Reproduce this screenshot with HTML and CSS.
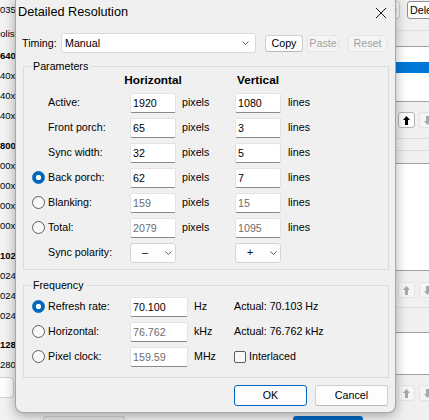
FILE: index.html
```html
<!DOCTYPE html>
<html>
<head>
<meta charset="utf-8">
<title>Detailed Resolution</title>
<link rel="stylesheet" href="styles.css">
</head>
<body>
<div class="desktop">
  <div class="app-left">
    <div class="ln ch">1035</div>
    <div class="ln cut g4">Polish</div>
    <div class="ln hd g2">640</div>
    <div class="ln ch">640x</div>
    <div class="ln ch">640x</div>
    <div class="ln ch">640x</div>
    <div class="ln hd g10">800</div>
    <div class="ln ch">800x</div>
    <div class="ln ch">800x</div>
    <div class="ln ch">800x</div>
    <div class="ln ch">800x</div>
    <div class="ln hd g10">102</div>
    <div class="ln ch">1024</div>
    <div class="ln ch">1024</div>
    <div class="ln ch">1024</div>
    <div class="ln hd g9">128</div>
    <div class="ln ch">1280</div>
    <div class="lbtn"></div>
    <div class="lbottom"><span class="lb1"></span><span class="lb2"></span></div>
  </div>

  <div class="app-right">
    <div class="rtool"><span class="rbtn first">Save</span><span class="rbtn">Delete</span></div>
    <div class="rhead"></div>
    <div class="rlist rl1"><div class="rsel"></div></div>
    <div class="rarr line">
      <span class="abtn"><svg width="7" height="9" viewBox="0 0 7 9"><path d="M3.5 0 L7 4 L5 4 L5 9 L2 9 L2 4 L0 4 Z" fill="#000"/></svg></span>
      <span class="abtn dis"><svg width="7" height="9" viewBox="0 0 7 9"><path d="M3.5 9 L7 5 L5 5 L5 0 L2 0 L2 5 L0 5 Z" fill="#a8a8a8"/></svg></span>
    </div>
    <div class="rband line"></div>
    <div class="rband"></div>
    <div class="rlist rl2"></div>
    <div class="rarr line r2">
      <span class="abtn dis"><svg width="7" height="9" viewBox="0 0 7 9"><path d="M3.5 0 L7 4 L5 4 L5 9 L2 9 L2 4 L0 4 Z" fill="#a8a8a8"/></svg></span>
      <span class="abtn dis"><svg width="7" height="9" viewBox="0 0 7 9"><path d="M3.5 9 L7 5 L5 5 L5 0 L2 0 L2 5 L0 5 Z" fill="#a8a8a8"/></svg></span>
    </div>
    <div class="rband3"></div>
    <div class="rlist rl3"></div>
    <div class="rarr">
      <span class="abtn dis"><svg width="7" height="9" viewBox="0 0 7 9"><path d="M3.5 0 L7 4 L5 4 L5 9 L2 9 L2 4 L0 4 Z" fill="#a8a8a8"/></svg></span>
      <span class="abtn dis"><svg width="7" height="9" viewBox="0 0 7 9"><path d="M3.5 9 L7 5 L5 5 L5 0 L2 0 L2 5 L0 5 Z" fill="#a8a8a8"/></svg></span>
    </div>
  </div>

  <div class="dialog">
    <div class="titlebar">
      <span class="title">Detailed Resolution</span>
      <svg class="close" width="10" height="10" viewBox="0 0 10 10"><path d="M0 0 L10 10 M10 0 L0 10" stroke="#1a1a1a" stroke-width="1"/></svg>
    </div>

    <div class="trow">
      <span class="tlabel">Timing:</span>
      <div class="combo"><span>Manual</span><svg class="chev" width="7" height="4" viewBox="0 0 7 4"><path d="M0.5 0.5 L3.5 3.5 L6.5 0.5" fill="none" stroke="#606060" stroke-width="1"/></svg></div>
      <button class="btn b-copy">Copy</button>
      <button class="btn dis b-paste">Paste</button>
      <button class="btn dis b-reset">Reset</button>
    </div>

    <div class="group params">
      <div class="gtitle">Parameters</div>
      <div class="pgrid">
        <div></div><div class="hdr">Horizontal</div><div></div><div class="hdr">Vertical</div><div></div>

        <div class="lab">Active:</div>
        <div class="edit">1920</div><div class="unit">pixels</div>
        <div class="edit">1080</div><div class="unit2">lines</div>

        <div class="lab">Front porch:</div>
        <div class="edit">65</div><div class="unit">pixels</div>
        <div class="edit">3</div><div class="unit2">lines</div>

        <div class="lab">Sync width:</div>
        <div class="edit">32</div><div class="unit">pixels</div>
        <div class="edit">5</div><div class="unit2">lines</div>

        <div class="lab rad"><span class="radio on"></span>Back porch:</div>
        <div class="edit">62</div><div class="unit">pixels</div>
        <div class="edit">7</div><div class="unit2">lines</div>

        <div class="lab rad"><span class="radio"></span>Blanking:</div>
        <div class="edit dis">159</div><div class="unit">pixels</div>
        <div class="edit dis">15</div><div class="unit2">lines</div>

        <div class="lab rad"><span class="radio"></span>Total:</div>
        <div class="edit dis">2079</div><div class="unit">pixels</div>
        <div class="edit dis">1095</div><div class="unit2">lines</div>

        <div class="lab">Sync polarity:</div>
        <div class="pol"><span class="pv">–</span><svg class="pchev" width="7" height="4" viewBox="0 0 7 4"><path d="M0.5 0.5 L3.5 3.5 L6.5 0.5" fill="none" stroke="#606060" stroke-width="1"/></svg></div>
        <div></div>
        <div class="pol"><span class="pv">+</span><svg class="pchev" width="7" height="4" viewBox="0 0 7 4"><path d="M0.5 0.5 L3.5 3.5 L6.5 0.5" fill="none" stroke="#606060" stroke-width="1"/></svg></div>
        <div></div>
      </div>
    </div>

    <div class="group freq">
      <div class="gtitle">Frequency</div>
      <div class="fgrid">
        <div class="lab rad"><span class="radio on"></span>Refresh rate:</div>
        <div class="edit">70.100</div><div class="unit">Hz</div>
        <div class="actual">Actual: 70.103 Hz</div>

        <div class="lab rad"><span class="radio"></span>Horizontal:</div>
        <div class="edit dis">76.762</div><div class="unit">kHz</div>
        <div class="actual">Actual: 76.762 kHz</div>

        <div class="lab rad"><span class="radio"></span>Pixel clock:</div>
        <div class="edit dis">159.59</div><div class="unit">MHz</div>
        <div class="flab"><span class="check"></span>Interlaced</div>
      </div>
    </div>

    <div class="actions">
      <button class="act def">OK</button>
      <button class="act">Cancel</button>
    </div>
  </div>
</div>
</body>
</html>
```

FILE: styles.css
```css
* { box-sizing: border-box; margin: 0; padding: 0; }
html, body { width: 429px; height: 420px; overflow: hidden; }
body {
  background: #f0f0f0;
  font-family: "Liberation Sans", Arial, sans-serif;
  font-size: 10.7px;
  color: #000;
  line-height: 1.2;
}
.desktop { position: relative; display: flex; width: 429px; height: 420px; }

/* ---------- background application window ---------- */
.app-left {
  flex: 1;
  display: flex;
  flex-direction: column;
  overflow: hidden;
  font-size: 9.5px;
  background: #f2f2f2;
}
.ln { height: 20px; line-height: 20px; white-space: nowrap; }
.ln.hd { font-weight: bold; }
.ln.ch { text-indent: -5.3px; }
.ln.cut { text-indent: -6px; }
.g2 { margin-top: 2px; }
.g4 { margin-top: 4px; }
.g9 { margin-top: 9px; }
.g10 { margin-top: 10px; }
.lbtn {
  margin-top: 2px;
  margin-left: -46px;
  width: 60px;
  height: 21px;
  flex: none;
  background: #fdfdfd;
  border: 1px solid #d0d0d0;
  border-radius: 4px;
}
.lbottom { margin-top: auto; height: 4px; display: flex; }
.lb1 { margin-left: 43px; width: 82px; background: #e9e9e9; border: 1px solid #d0d0d0; border-bottom: none; border-radius: 3px 3px 0 0; }
.lb2 { margin-left: 168px; width: 70px; background: #0067c0; border-radius: 3px 3px 0 0; }

.app-right {
  width: 40px;
  flex: none;
  display: flex;
  flex-direction: column;
  overflow: hidden;
  background: #f0f0f0;
}
.rtool { height: 31px; flex: none; border-bottom: 1px solid #dedede; display: flex; gap: 7px; padding-top: 1px; }
.rbtn {
  flex: none;
  height: 18px;
  line-height: 16px;
  padding: 0 2px;
  white-space: nowrap;
  background: #fdfdfd;
  border: 1px solid #8f8f8f;
  border-radius: 3px;
}
.rbtn.first { width: 41px; margin-left: -30px; border-color: #d0d0d0; color: #9a9a9a; overflow: hidden; text-align: right; }
.rhead { height: 15px; flex: none; }
.rlist { flex: none; background: #fff; border-top: 1px solid #a0a0a0; border-bottom: 1px solid #a0a0a0; }
.rl1 { height: 56px; }
.rl2 { height: 108px; }
.rl3 { height: 43px; }
.rsel { margin-top: 15px; height: 11px; background: #0078d7; }
.rarr { height: 37px; flex: none; display: flex; align-items: flex-start; gap: 4px; padding: 10px 0 0 9px; }
.rarr.r2 { padding-top: 11px; }
.line { border-bottom: 1px solid #dcdcdc; }
.rband { height: 12px; flex: none; }
.rband3 { height: 24px; flex: none; }
.abtn {
  flex: none;
  width: 17px;
  height: 16px;
  display: flex;
  align-items: center;
  justify-content: center;
  background: #fdfdfd;
  border: 1px solid #b4b4b4;
  border-radius: 3px;
}
.abtn.dis { background: #f5f5f5; border-color: #e3e3e3; }

/* ---------- dialog ---------- */
.dialog {
  position: absolute;
  left: 15px;
  top: -6px;
  width: 381px;
  height: 419px;
  background: #f0f0f0;
  border: 1px solid rgba(0, 0, 0, 0.3);
  border-radius: 8px;
  box-shadow: 0 3px 12px rgba(0, 0, 0, 0.32);
  display: flex;
  flex-direction: column;
}
.titlebar { flex: none; height: 36px; display: flex; align-items: center; padding-left: 2px; }
.title { font-size: 12.7px; }
.close { margin-left: auto; margin-right: 9px; }

.trow { display: flex; align-items: center; height: 20px; margin-top: 2px; padding-left: 6px; }
.tlabel { width: 39px; flex: none; }
.combo {
  width: 195px;
  height: 20px;
  flex: none;
  display: flex;
  align-items: center;
  justify-content: space-between;
  padding: 0 6px 0 3px;
  background: #fff;
  border: 1px solid #d9d9d9;
  border-radius: 3px;
}
.btn {
  font: inherit;
  height: 17px;
  flex: none;
  display: flex;
  align-items: center;
  justify-content: center;
  background: #fdfdfd;
  color: #000;
  border: 1px solid #d0d0d0;
  border-bottom-color: #b8b8b8;
  border-radius: 3px;
}
.btn.dis { background: #f5f5f5; border-color: #e5e5e5; color: #a0a0a0; }
.b-copy { width: 38px; margin-left: 9px; }
.b-paste { width: 32px; margin-left: 4px; }
.b-reset { width: 39px; margin-left: 9px; }

.group { margin: 0 6px 0 7px; border: 1px solid #dcdcdc; }
.params { margin-top: 13px; padding-bottom: 4px; }
.freq { margin-top: 15px; padding-bottom: 8px; }
.gtitle {
  margin: -7px 0 0 7px;
  padding: 0 2px;
  width: max-content;
  height: 13px;
  line-height: 13px;
  background: #f0f0f0;
}
.pgrid {
  display: grid;
  grid-template-columns: 106px 46px 59px 46px 1fr;
  grid-template-rows: 19px repeat(7, 25px);
  align-items: center;
  margin-top: -2px;
}
.fgrid {
  display: grid;
  grid-template-columns: 106px 58px 46px 1fr;
  grid-template-rows: repeat(3, 25px);
  align-items: center;
  margin-top: 2px;
}
.hdr { display: flex; justify-content: center; white-space: nowrap; font-weight: bold; font-size: 11.8px; }
.lab { padding-left: 24px; white-space: nowrap; }
.lab.rad { padding-left: 8px; display: flex; align-items: center; gap: 3px; }
.unit { padding-left: 6px; }
.unit2 { padding-left: 7px; }
.edit {
  height: 20px;
  line-height: 18px;
  padding-left: 2px;
  background: #fff;
  border: 1px solid #e3e3e3;
  border-bottom-color: #8a8a8a;
  border-radius: 2px;
}
.edit.dis { color: #6d6d6d; }
.radio {
  flex: none;
  width: 13px;
  height: 13px;
  border-radius: 50%;
  border: 1px solid #5c5c5c;
  background: #f9f9f9;
}
.radio.on {
  border-color: #0067c0;
  background: radial-gradient(circle, #fff 0 2.4px, #0067c0 3px);
}
.pol {
  width: 46px;
  height: 20px;
  display: flex;
  align-items: center;
  background: #fdfdfd;
  border: 1px solid #d5d5d5;
  border-radius: 3px;
}
.pv { width: 28px; text-align: center; }
.pchev { margin-left: 6px; }
.flab { display: flex; align-items: center; gap: 3px; }
.check {
  flex: none;
  width: 12px;
  height: 12px;
  border: 1px solid #5c5c5c;
  border-radius: 2px;
  background: #f9f9f9;
}

.actions { display: flex; justify-content: flex-end; gap: 8px; margin-top: 7px; padding-right: 7px; }
.act {
  font: inherit;
  width: 73px;
  height: 21px;
  background: #fdfdfd;
  color: #000;
  border: 1px solid #d0d0d0;
  border-bottom-color: #b8b8b8;
  border-radius: 3px;
}
.act.def { border-color: #0067c0; }
```
